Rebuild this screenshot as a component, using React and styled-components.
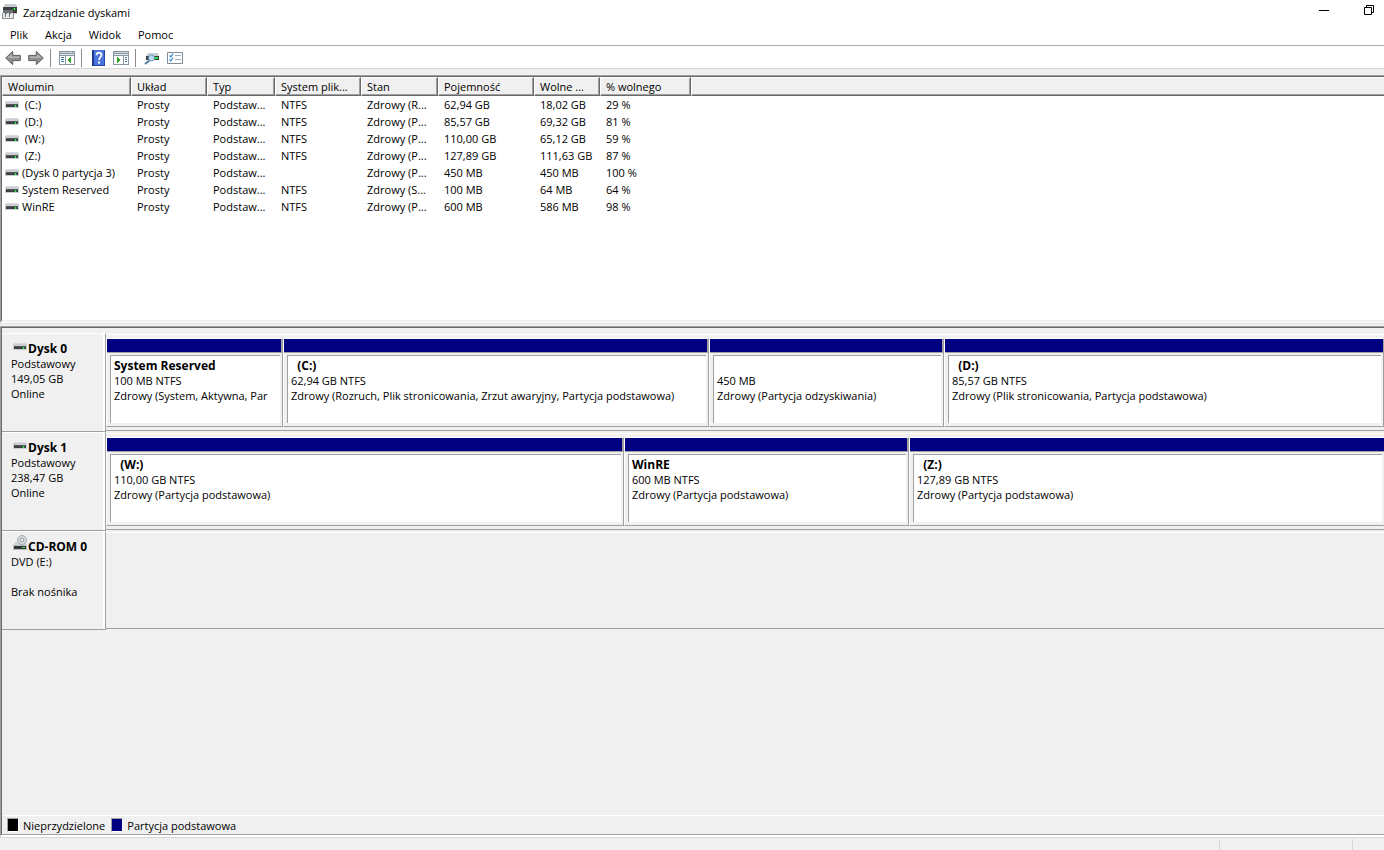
import React from 'react'
import { useState } from 'react'
import styled, { createGlobalStyle } from 'styled-components'

const volumes = [
    { name: '\u00a0(C:)', fs: 'NTFS', status: 'Zdrowy (R...', capacity: '62,94 GB', free: '18,02 GB', percent: '29 %' },
    { name: '\u00a0(D:)', fs: 'NTFS', status: 'Zdrowy (P...', capacity: '85,57 GB', free: '69,32 GB', percent: '81 %' },
    { name: '\u00a0(W:)', fs: 'NTFS', status: 'Zdrowy (P...', capacity: '110,00 GB', free: '65,12 GB', percent: '59 %' },
    { name: '\u00a0(Z:)', fs: 'NTFS', status: 'Zdrowy (P...', capacity: '127,89 GB', free: '111,63 GB', percent: '87 %' },
    { name: '(Dysk 0 partycja 3)', fs: '', status: 'Zdrowy (P...', capacity: '450 MB', free: '450 MB', percent: '100 %' },
    { name: 'System Reserved', fs: 'NTFS', status: 'Zdrowy (S...', capacity: '100 MB', free: '64 MB', percent: '64 %' },
    { name: 'WinRE', fs: 'NTFS', status: 'Zdrowy (P...', capacity: '600 MB', free: '586 MB', percent: '98 %' },
]

const columns = [
    { label: 'Wolumin', width: 129 },
    { label: 'Układ', width: 76 },
    { label: 'Typ', width: 68 },
    { label: 'System plik...', width: 86 },
    { label: 'Stan', width: 77 },
    { label: 'Pojemność', width: 96 },
    { label: 'Wolne ...', width: 66 },
    { label: '% wolnego', width: 91 },
]

const disks = [
    {
        name: 'Dysk 0',
        lines: ['Podstawowy', '149,05 GB', 'Online'],
        partitions: [
            { share: 177, title: 'System Reserved', size: '100 MB NTFS', status: 'Zdrowy (System, Aktywna, Par' },
            { share: 426, title: '\u00a0\u00a0(C:)', size: '62,94 GB NTFS', status: 'Zdrowy (Rozruch, Plik stronicowania, Zrzut awaryjny, Partycja podstawowa)' },
            { share: 235, title: '\u00a0', size: '450 MB', status: 'Zdrowy (Partycja odzyskiwania)' },
            { share: 440, title: '\u00a0\u00a0(D:)', size: '85,57 GB NTFS', status: 'Zdrowy (Plik stronicowania, Partycja podstawowa)' },
        ],
    },
    {
        name: 'Dysk 1',
        open: true,
        lines: ['Podstawowy', '238,47 GB', 'Online'],
        partitions: [
            { share: 518, title: '\u00a0\u00a0(W:)', size: '110,00 GB NTFS', status: 'Zdrowy (Partycja podstawowa)' },
            { share: 285, title: 'WinRE', size: '600 MB NTFS', status: 'Zdrowy (Partycja podstawowa)' },
            { share: 475, title: '\u00a0\u00a0(Z:)', size: '127,89 GB NTFS', status: 'Zdrowy (Partycja podstawowa)' },
        ],
    },
    {
        name: 'CD-ROM 0',
        cd: true,
        lines: ['DVD (E:)', '\u00a0', 'Brak nośnika'],
        partitions: [],
    },
]

const DriveIcon = () => (
    <svg width="14" height="7" viewBox="0 0 14 7" shapeRendering="crispEdges" aria-hidden="true">
        <path d="M1 0h12v2H1z" fill="#d6dae0" />
        <path d="M0 1h14v6H0z" fill="#cbcfd4" />
        <path d="M1 3h12v3H1z" fill="#3d4144" />
        <path d="M1 3h12v1H1z" fill="#54585b" />
        <path d="M9 4h3v2H9z" fill="#23643a" />
        <path d="M10 4h1v2h-1z" fill="#3cf04a" />
    </svg>
)

const CdIcon = () => (
    <svg width="15" height="15" viewBox="0 0 15 15" aria-hidden="true">
        <path d="M2 7h11l1 4H0z" fill="#cfd3d7" />
        <circle cx="9" cy="5" r="4.5" fill="#d6dadd" stroke="#a4a9ad" />
        <circle cx="9" cy="5" r="1.8" fill="#f4f4f4" stroke="#949a9e" />
        <path d="M0 10h14v5H0z" fill="#b9bdc1" />
        <path d="M1 11h12v3H1z" fill="#34383a" />
        <path d="M9 12h3v1H9z" fill="#35e548" />
    </svg>
)

const AppIcon = () => (
    <svg width="16" height="16" viewBox="0 0 16 16" shapeRendering="crispEdges" aria-hidden="true">
        <path d="M3 0h11v1h1v2H2V1h1z" fill="#c9cdd2" />
        <path d="M1 3h14v6H1z" fill="#3b3f42" />
        <path d="M10 4h4v2h-4z" fill="#1d6a33" />
        <path d="M12 4h1v2h-1z" fill="#4dfb5c" />
        <path d="M1 6h10v3H1z" fill="#6f7274" />
        <path d="M12 9h3v1h-3z" fill="#c9cdd2" />
        <path d="M0 9h12v6H0z" fill="#8f9193" />
        <path d="M1 9h10v5H1z" fill="#e3e4e6" />
        <path d="M3 9h2v4H3zM7 9h2v4H7z" fill="#6a6d70" />
        <path d="M4 10h1v4H4zM8 10h1v4H8z" fill="#fff" />
    </svg>
)

const ArrowIcon = ({ forward }) => (
    <svg width="16" height="16" viewBox="0 0 16 16" aria-hidden="true">
        <g transform={forward ? 'matrix(-1 0 0 1 16 0)' : undefined}>
            <path d="M.7 8l7-6.600v4h7.600v5.200H7.700v4z" fill="#8d8d8d" stroke="#5e5e5e" />
            <path d="M2.300 8l4.400-4.100v2.500h7.600V8z" fill="#b5b5b5" />
        </g>
    </svg>
)

const PaneIcon = ({ right }) => (
    <svg width="16" height="14" viewBox="0 0 16 14" shapeRendering="crispEdges" aria-hidden="true">
        <path d="M0 0h16v14H0z" fill="#8a97a3" />
        <path d="M1 1h11v1H1z" fill="#c8d2dc" />
        <path d="M12 1h1v1h-1zM14 1h1v1h-1z" fill="#fff" />
        <path d="M1 3h14v1H1z" fill="#e4e9ed" />
        <path d="M1 5h14v8H1z" fill="#fdfdfd" />
        {right ? (
            <>
                <path d="M10 5h1v8h-1z" fill="#8a97a3" />
                <path d="M12 6h2v1h-2zM12 8h2v1h-2zM12 10h2v1h-2z" fill="#39739f" />
                <path d="M4 6h1v6H4zM5 7h1v4H5zM6 8h1v2H6z" fill="#35a528" />
            </>
        ) : (
            <>
                <path d="M6 5h1v8H6z" fill="#8a97a3" />
                <path d="M2 6h3v1H2zM2 8h3v1H2zM2 10h3v1H2z" fill="#39739f" />
                <path d="M11 6h1v6h-1zM10 7h1v4h-1zM9 8h1v2H9z" fill="#35a528" />
            </>
        )}
    </svg>
)

const HelpIcon = () => (
    <svg width="13" height="16" viewBox="0 0 13 16" aria-hidden="true">
        <path d="M0 0h13v16H0z" fill="#2447ae" />
        <path d="M2 0h10v15H2z" fill="#4a74dc" />
        <path d="M0 0h2v16H0z" fill="#1d3a94" />
        <path d="M4.500 5.200C4.500 1.800 9.500 2 9.500 4.900c0 2-2.400 2.300-2.400 5" fill="none" stroke="#fff" strokeWidth="1.800" />
        <path d="M6 11.500h2v2H6z" fill="#fff" />
    </svg>
)

const RescanIcon = () => (
    <svg width="16" height="13" viewBox="0 0 16 13" aria-hidden="true">
        <path d="M4 1h10l1 3H2z" fill="#c9cdd2" />
        <path d="M2 4h13v4H2z" fill="#3a3e40" />
        <path d="M11 5h3v2h-3z" fill="#2ce044" />
        <path d="M1 12l5-4" stroke="#4f7ea3" strokeWidth="2" />
        <circle cx="7.500" cy="6" r="3" fill="#b9dcf2" stroke="#6f9dbd" />
    </svg>
)

const TasksIcon = () => (
    <svg width="16" height="12" viewBox="0 0 16 12" aria-hidden="true">
        <path d="M.5.500h15v11H.5z" fill="#fdfdfd" stroke="#7e8e9b" />
        <path d="M2.500 3.500l1.200 1.300 2.300-3M2.500 7.500l1.200 1.300 2.300-3" fill="none" stroke="#2e8ad4" strokeWidth="1.200" />
        <path d="M8 3h6v1H8zM8 7h6v1H8z" fill="#a5afb8" />
    </svg>
)

const MinimizeIcon = () => (
    <svg width="10" height="10" viewBox="0 0 10 10" aria-hidden="true">
        <path d="M0 5h10v1H0z" />
    </svg>
)

const RestoreIcon = () => (
    <svg width="10" height="10" viewBox="0 0 10 10" fill="none" stroke="#000" aria-hidden="true">
        <path d="M.5 2.500h7v7h-7zM2.500 2.500v-2h7v7h-2" />
    </svg>
)

const DiskRow = ({ disk }) => {
    const tracks = disk.partitions.map((part) => `minmax(0, ${part.share}fr)`).join(' ')

    return (
        <Disk>
            <DiskLabel>
                <DiskName>
                    <DiskIcon $cd={disk.cd}>{disk.cd ? <CdIcon /> : <DriveIcon />}</DiskIcon>
                    {disk.name}
                </DiskName>
                {disk.lines.map((line, i) => (
                    <Line key={i}>{line}</Line>
                ))}
            </DiskLabel>
            <Graph style={{ gridTemplateColumns: tracks }}>
                {disk.partitions.map((part, i) => (
                    <Partition key={i} $open={disk.open && i === disk.partitions.length - 1}>
                        <Bar />
                        <Box>
                            <PartTitle>{part.title}</PartTitle>
                            <Line>{part.size}</Line>
                            <Line>{part.status}</Line>
                        </Box>
                    </Partition>
                ))}
            </Graph>
        </Disk>
    )
}

const App = () => {
    const [selected, setSelected] = useState(null)

    return (
        <Window>
            <GlobalStyle />
            <TitleBar>
                <AppIcon />
                <Title>Zarządzanie dyskami</Title>
                <WindowButton aria-label="Minimalizuj"><MinimizeIcon /></WindowButton>
                <WindowButton aria-label="Przywróć"><RestoreIcon /></WindowButton>
            </TitleBar>
            <MenuBar>
                {['Plik', 'Akcja', 'Widok', 'Pomoc'].map((item) => (
                    <MenuButton key={item}>{item}</MenuButton>
                ))}
            </MenuBar>
            <Toolbar>
                <ToolButton aria-label="Wstecz"><ArrowIcon /></ToolButton>
                <ToolButton aria-label="Dalej"><ArrowIcon forward /></ToolButton>
                <Separator />
                <ToolButton aria-label="Drzewo konsoli"><PaneIcon /></ToolButton>
                <Separator />
                <ToolButton aria-label="Pomoc"><HelpIcon /></ToolButton>
                <ToolButton aria-label="Okienko akcji"><PaneIcon right /></ToolButton>
                <Separator />
                <ToolButton aria-label="Skanuj dyski"><RescanIcon /></ToolButton>
                <ToolButton aria-label="Ustawienia"><TasksIcon /></ToolButton>
            </Toolbar>
            <VolumePane>
                <VolumeInner>
                    <Table>
                        <colgroup>
                            {columns.map((col) => (
                                <col key={col.label} style={{ width: col.width }} />
                            ))}
                            <col />
                        </colgroup>
                        <thead>
                            <tr>
                                {columns.map((col) => (
                                    <HeadCell key={col.label}>{col.label}</HeadCell>
                                ))}
                                <HeadFill />
                            </tr>
                        </thead>
                        <tbody>
                            {volumes.map((vol) => (
                                <VolumeRow key={vol.name} $selected={selected === vol.name} onClick={() => setSelected(vol.name)}>
                                    <Cell $first>
                                        <NameCell>
                                            <DriveIcon />
                                            {vol.name}
                                        </NameCell>
                                    </Cell>
                                    <Cell>Prosty</Cell>
                                    <Cell>Podstaw...</Cell>
                                    <Cell>{vol.fs}</Cell>
                                    <Cell>{vol.status}</Cell>
                                    <Cell>{vol.capacity}</Cell>
                                    <Cell>{vol.free}</Cell>
                                    <Cell>{vol.percent}</Cell>
                                    <Cell />
                                </VolumeRow>
                            ))}
                        </tbody>
                    </Table>
                </VolumeInner>
            </VolumePane>
            <Splitter />
            <GraphPane>
                <GraphInner>
                    <DiskList>
                        {disks.map((disk) => (
                            <DiskRow key={disk.name} disk={disk} />
                        ))}
                    </DiskList>
                    <Legend>
                        <Swatch $color="#000" />
                        <LegendText>Nieprzydzielone</LegendText>
                        <Swatch $color="#000080" />
                        <LegendText>Partycja podstawowa</LegendText>
                    </Legend>
                </GraphInner>
            </GraphPane>
            <StatusBar>
                <StatusCell />
            </StatusBar>
        </Window>
    )
}

const GlobalStyle = createGlobalStyle`
    *{
        box-sizing: border-box;
    }
    body{
        margin: 0;
        background: #f0f0f0;
        color: #000;
        font-family: "Open Sans", "Noto Sans", sans-serif;
        font-size: 11px;
        line-height: 15px;
    }
    button{
        font: inherit;
        color: inherit;
        background: none;
        border: none;
        padding: 0;
    }
    svg{
        display: block;
        flex: none;
    }
`;

const Window = styled.div`
    display: flex;
    flex-direction: column;
    min-height: 100vh;
    overflow: hidden;
`;

const TitleBar = styled.header`
    display: flex;
    align-items: center;
    height: 24px;
    padding: 0 10px 0 2px;
    background: #fff;
`;

const Title = styled.h1`
    flex: 1;
    margin: 0 0 0 5px;
    font-size: 11px;
    font-weight: 400;
`;

const WindowButton = styled.button`
    align-self: flex-start;
    margin-left: 35px;
    padding-top: 5px;
`;

const MenuBar = styled.nav`
    display: flex;
    gap: 1px;
    height: 22px;
    padding-left: 2px;
    background: #fff;
    border-bottom: 1px solid #aeaeae;
`;

const MenuButton = styled.button`
    padding: 0 8px;
    &:hover{
        background: #e5f3ff;
    }
`;

const Toolbar = styled.div`
    display: flex;
    align-items: center;
    height: 23px;
    padding: 2px 0 0 1px;
    margin-bottom: 6px;
    background: #fff;
    border-bottom: 1px solid #d7d7d7;
`;

const ToolButton = styled.button`
    display: flex;
    align-items: center;
    justify-content: center;
    width: 23px;
    height: 20px;
    padding-left: 1px;
`;

const Separator = styled.span`
    width: 1px;
    height: 18px;
    margin: 0 4px 0 3px;
    background: #8d8d8d;
`;

const VolumePane = styled.section`
    display: flex;
    height: 248px;
    border-top: 1px solid #a0a0a0;
    border-left: 1px solid #a0a0a0;
    border-bottom: 1px solid #fff;
`;

const VolumeInner = styled.div`
    flex: 1;
    min-width: 0;
    background: #fff;
    border-top: 1px solid #696969;
    border-left: 1px solid #696969;
    border-bottom: 2px solid #f0f0f0;
`;

const Table = styled.table`
    width: 100%;
    table-layout: fixed;
    border-collapse: separate;
    border-spacing: 0;
`;

const HeadCell = styled.th`
    height: 19px;
    padding: 0 0 0 5px;
    line-height: 15px;
    font-weight: 400;
    text-align: left;
    white-space: nowrap;
    background: #f0f0f0;
    border-top: 1px solid #fff;
    border-left: 1px solid #fff;
    border-right: 1px solid #696969;
    border-bottom: 1px solid #696969;
    box-shadow: inset -1px -1px #a0a0a0;
`;

const HeadFill = styled.td`
    padding: 0;
    background: #f0f0f0;
    border-top: 1px solid #fff;
    border-left: 1px solid #fff;
    border-bottom: 1px solid #696969;
    box-shadow: inset 0 -1px #a0a0a0;
`;

const VolumeRow = styled.tr`
    background: ${(props) => (props.$selected ? '#cce8ff' : 'transparent')};
`;

const Cell = styled.td`
    height: 17px;
    padding: 0 0 0 ${(props) => (props.$first ? '3px' : '6px')};
    white-space: nowrap;
`;

const NameCell = styled.div`
    display: flex;
    align-items: center;
    gap: 3px;
`;

const Splitter = styled.div`
    height: 3px;
    border-top: 1px solid #e0e0e0;
`;

const GraphPane = styled.section`
    display: flex;
    flex: 1;
    border-top: 1px solid #a0a0a0;
    border-left: 1px solid #a0a0a0;
    border-bottom: 2px solid #fff;
`;

const GraphInner = styled.div`
    display: flex;
    flex-direction: column;
    flex: 1;
    min-width: 0;
    border-top: 1px solid #696969;
    border-left: 1px solid #696969;
    border-bottom: 1px solid #a0a0a0;
`;

const DiskList = styled.div`
    flex: 1;
    padding-top: 5px;
`;

const Disk = styled.div`
    display: grid;
    grid-template-columns: 104px minmax(0, 1fr);
    min-height: 99px;
`;

const DiskLabel = styled.div`
    padding: 7px 0 0 9px;
    border-top: 1px solid #fff;
    border-right: 1px solid #a0a0a0;
    border-bottom: 1px solid #a0a0a0;
    box-shadow: inset -2px 0 #fff;
`;

const DiskName = styled.div`
    display: flex;
    font-size: 12px;
    font-weight: 700;
    white-space: nowrap;
`;

const DiskIcon = styled.span`
    width: 15px;
    margin-left: 2px;
    margin-top: ${(props) => (props.$cd ? '-4px' : '2px')};
`;

const Line = styled.div`
    white-space: nowrap;
`;

const Graph = styled.div`
    display: grid;
    margin: 1px 0;
    padding: 3px 0;
    border-top: 1px solid #fff;
    border-bottom: 1px solid #a0a0a0;
`;

const Partition = styled.div`
    border-top: 1px solid #fff;
    border-left: 1px solid #fff;
    border-bottom: 1px solid #a0a0a0;
    border-right: ${(props) => (props.$open ? 'none' : '1px solid #a0a0a0')};
`;

const Bar = styled.div`
    height: 14px;
    background: #000080;
    border-right: 1px solid #a0a0a0;
    border-bottom: 1px solid #a0a0a0;
    ${Partition}:last-child &{
        border-right: none;
    }
`;

const Box = styled.div`
    min-height: 68px;
    margin: 2px 2px 3px 3px;
    padding: 2px 3px 0 3px;
    overflow: hidden;
    background: #fff;
    border-top: 1px solid #a0a0a0;
    border-left: 1px solid #a0a0a0;
`;

const PartTitle = styled.div`
    font-size: 12px;
    font-weight: 700;
`;

const Legend = styled.footer`
    display: flex;
    align-items: center;
    height: 19px;
    padding-left: 5px;
    border-top: 1px solid #fff;
`;

const Swatch = styled.span`
    width: 12px;
    height: 14px;
    background: ${(props) => props.$color};
    border: 1px solid #a0a0a0;
    border-right-color: #fff;
    border-bottom-color: #fff;
`;

const LegendText = styled.span`
    margin: 0 6px 0 4px;
`;

const StatusBar = styled.div`
    display: flex;
    justify-content: flex-end;
    height: 13px;
    padding: 1px 31px 0 0;
    border-top: 1px solid #d7d7d7;
`;

const StatusCell = styled.div`
    width: 134px;
    border-left: 1px solid #d7d7d7;
    border-right: 1px solid #d7d7d7;
`;

export default App
